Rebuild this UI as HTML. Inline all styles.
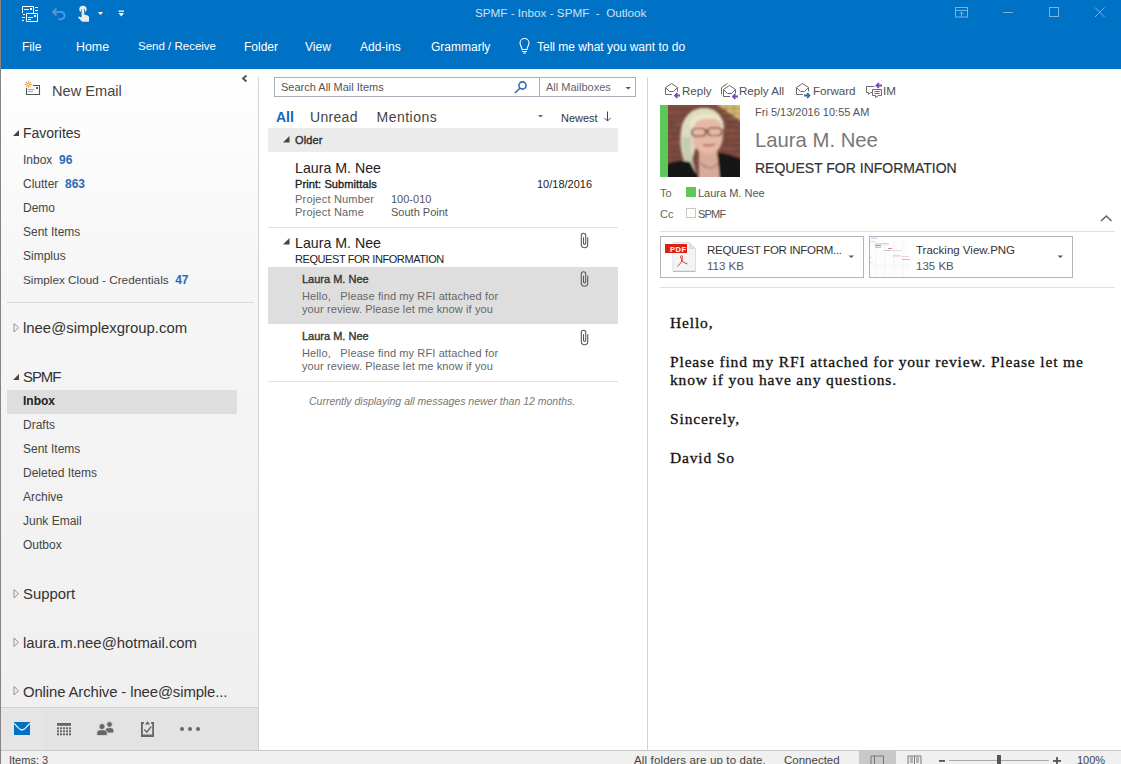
<!DOCTYPE html>
<html><head><meta charset="utf-8">
<style>
*{margin:0;padding:0;box-sizing:border-box}
html,body{width:1121px;height:764px;overflow:hidden;background:#fff;font-family:"Liberation Sans",sans-serif}
.a{position:absolute}
.t{position:absolute;white-space:pre;line-height:1;font-family:"Liberation Sans",sans-serif}
#hdr{left:0;top:0;width:1121px;height:69px;background:#0072c6}
#lp{left:0;top:69px;width:259px;height:681px;background:linear-gradient(#ffffff,#f6f6f6 30%,#efefef)}
.fold{font-size:12px;color:#444}
.cnt{font-size:12px;color:#2a6ab8;font-weight:bold}
.acct{font-size:14.9px;color:#333}
</style></head><body>
<!-- header -->
<div id="hdr" class="a"></div>
<div class="t" style="left:475px;top:7px;font-size:11.7px;color:#cde0f2">SPMF - Inbox - SPMF  -  Outlook</div>
<div class="t" style="left:22px;top:41px;font-size:12px;color:#fff">File</div>
<div class="t" style="left:76px;top:41px;font-size:12.4px;color:#fff">Home</div>
<div class="t" style="left:138px;top:41px;font-size:11.5px;color:#fff">Send / Receive</div>
<div class="t" style="left:244px;top:41px;font-size:12px;color:#fff">Folder</div>
<div class="t" style="left:305px;top:41px;font-size:12px;color:#fff">View</div>
<div class="t" style="left:360px;top:41px;font-size:12px;color:#fff">Add-ins</div>
<div class="t" style="left:431px;top:41px;font-size:12px;color:#fff">Grammarly</div>
<div class="t" style="left:537px;top:41px;font-size:12px;color:#fff">Tell me what you want to do</div>

<!-- left pane -->
<div id="lp" class="a"></div>
<div class="a" style="left:258px;top:77px;width:1px;height:630px;background:#d4d4d4"></div>
<div class="t" style="left:52px;top:83.5px;font-size:14.6px;color:#444">New Email</div>
<div class="t" style="left:23px;top:126px;font-size:14px;color:#333">Favorites</div>
<div class="t fold" style="left:23px;top:154px">Inbox  <span class="cnt">96</span></div>
<div class="t fold" style="left:23px;top:178px">Clutter  <span class="cnt">863</span></div>
<div class="t fold" style="left:23px;top:202px">Demo</div>
<div class="t fold" style="left:23px;top:226px">Sent Items</div>
<div class="t fold" style="left:23px;top:250px">Simplus</div>
<div class="t fold" style="left:23px;top:274px;font-size:11.75px">Simplex Cloud - Credentials  <span class="cnt">47</span></div>
<div class="a" style="left:7px;top:302px;width:247px;height:1px;background:#d8d8d8"></div>
<div class="t acct" style="left:23px;top:321px">lnee@simplexgroup.com</div>
<div class="t acct" style="left:23px;top:370px;letter-spacing:-1px">SPMF</div>
<div class="a" style="left:7px;top:390px;width:230px;height:24px;background:#dedede"></div>
<div class="t fold" style="left:23px;top:395px;font-weight:bold;color:#222">Inbox</div>
<div class="t fold" style="left:23px;top:419px">Drafts</div>
<div class="t fold" style="left:23px;top:443px">Sent Items</div>
<div class="t fold" style="left:23px;top:467px">Deleted Items</div>
<div class="t fold" style="left:23px;top:491px">Archive</div>
<div class="t fold" style="left:23px;top:515px">Junk Email</div>
<div class="t fold" style="left:23px;top:539px">Outbox</div>
<div class="t acct" style="left:23px;top:587px">Support</div>
<div class="t acct" style="left:23px;top:636px">laura.m.nee@hotmail.com</div>
<div class="t acct" style="left:23px;top:685px;letter-spacing:-0.12px">Online Archive - lnee@simple...</div>
<!-- nav bar -->
<div class="a" style="left:1px;top:707px;width:258px;height:43px;background:#e3e3e3;border-top:1px solid #d0d0d0;border-right:1px solid #d0d0d0"></div>
<div class="a" style="left:1px;top:708px;width:42px;height:42px;background:#e5e5e5"></div>

<!-- middle pane -->
<div class="a" style="left:274px;top:77px;width:362px;height:20px;border:1px solid #a9b0ba;background:#fff"></div>
<div class="a" style="left:539px;top:78px;width:1px;height:18px;background:#a9b0ba"></div>
<div class="t" style="left:281px;top:82px;font-size:11px;color:#555">Search All Mail Items</div>
<div class="t" style="left:546px;top:82px;font-size:11px;color:#666">All Mailboxes</div>
<div class="t" style="left:276px;top:110px;font-size:14px;font-weight:bold;color:#1464c0">All</div>
<div class="t" style="left:310px;top:110px;font-size:14px;color:#444;letter-spacing:0.3px">Unread</div>
<div class="t" style="left:376.5px;top:110px;font-size:14px;color:#444;letter-spacing:0.5px">Mentions</div>
<div class="t" style="left:561px;top:112.5px;font-size:11px;color:#333">Newest</div>
<div class="a" style="left:268px;top:128px;width:350px;height:24px;background:#ebebeb"></div>
<div class="t" style="left:295px;top:135px;font-size:11px;color:#333;letter-spacing:0.1px;-webkit-text-stroke:0.4px #333">Older</div>
<div class="t" style="left:295px;top:161px;font-size:14.2px;color:#222">Laura M. Nee</div>
<div class="t" style="left:295px;top:179px;font-size:11px;color:#222;letter-spacing:0.1px;-webkit-text-stroke:0.35px #222">Print: Submittals</div>
<div class="t" style="left:537px;top:179px;font-size:11px;color:#222">10/18/2016</div>
<div class="t" style="left:295px;top:194px;font-size:11px;color:#666;letter-spacing:0.2px">Project Number</div>
<div class="t" style="left:391px;top:194px;font-size:11px;color:#555">100-010</div>
<div class="t" style="left:295px;top:207px;font-size:11px;color:#666;letter-spacing:0.2px">Project Name</div>
<div class="t" style="left:391px;top:207px;font-size:11px;color:#555">South Point</div>
<div class="a" style="left:268px;top:227px;width:350px;height:1px;background:#e1e1e1"></div>
<div class="t" style="left:295px;top:236px;font-size:14.2px;color:#222">Laura M. Nee</div>
<div class="t" style="left:295px;top:254px;font-size:11px;color:#222;letter-spacing:-0.42px">REQUEST FOR INFORMATION</div>
<div class="a" style="left:268px;top:267px;width:350px;height:57px;background:#dedede"></div>
<div class="t" style="left:302px;top:274px;font-size:11px;color:#333;-webkit-text-stroke:0.35px #333">Laura M. Nee</div>
<div class="t" style="left:302px;top:291px;font-size:11px;color:#666;letter-spacing:0.12px">Hello,   Please find my RFI attached for</div>
<div class="t" style="left:302px;top:304px;font-size:11px;color:#666;letter-spacing:0.12px">your review. Please let me know if you</div>
<div class="t" style="left:302px;top:331px;font-size:11px;color:#333;-webkit-text-stroke:0.35px #333">Laura M. Nee</div>
<div class="t" style="left:302px;top:348px;font-size:11px;color:#666;letter-spacing:0.12px">Hello,   Please find my RFI attached for</div>
<div class="t" style="left:302px;top:361px;font-size:11px;color:#666;letter-spacing:0.12px">your review. Please let me know if you</div>
<div class="a" style="left:268px;top:381px;width:350px;height:1px;background:#e1e1e1"></div>
<div class="t" style="left:309px;top:396px;font-size:10.5px;font-style:italic;color:#777">Currently displaying all messages newer than 12 months.</div>
<div class="a" style="left:647px;top:77px;width:1px;height:673px;background:#d4d4d4"></div>

<!-- reading pane -->
<div class="t" style="left:682px;top:84.5px;font-size:11.6px;color:#505050">Reply</div>
<div class="t" style="left:739px;top:84.5px;font-size:11.6px;color:#505050">Reply All</div>
<div class="t" style="left:813px;top:84.5px;font-size:11.6px;color:#505050">Forward</div>
<div class="t" style="left:883px;top:84.5px;font-size:11.6px;color:#505050">IM</div>
<div class="a" style="left:660px;top:105px;width:8px;height:72px;background:#5cc85a"></div>
<div class="t" style="left:755px;top:107px;font-size:11px;color:#555">Fri 5/13/2016 10:55 AM</div>
<div class="t" style="left:755px;top:129.5px;font-size:20.3px;color:#777">Laura M. Nee</div>
<div class="t" style="left:755px;top:161px;font-size:14px;color:#333;-webkit-text-stroke:0.2px #333">REQUEST FOR INFORMATION</div>
<div class="t" style="left:660px;top:188px;font-size:11px;color:#666">To</div>
<div class="a" style="left:686px;top:187px;width:10px;height:10px;background:#5cc85a"></div>
<div class="t" style="left:698px;top:188px;font-size:11px;color:#555">Laura M. Nee</div>
<div class="t" style="left:660px;top:209px;font-size:11px;color:#666">Cc</div>
<div class="a" style="left:686px;top:208px;width:10px;height:10px;border:1px solid #c8c8c8"></div>
<div class="t" style="left:698px;top:209px;font-size:11px;color:#555;letter-spacing:-0.8px">SPMF</div>
<div class="a" style="left:660px;top:231px;width:455px;height:1px;background:#e0e0e0"></div>
<div class="a" style="left:660px;top:236px;width:204px;height:42px;border:1px solid #b4b4b4"></div>
<div class="a" style="left:869px;top:236px;width:204px;height:42px;border:1px solid #b4b4b4"></div>
<div class="t" style="left:707px;top:245px;font-size:11.5px;color:#333;letter-spacing:-0.3px">REQUEST FOR INFORM...</div>
<div class="t" style="left:707px;top:260.5px;font-size:11.5px;color:#555">113 KB</div>
<div class="t" style="left:916px;top:245px;font-size:11.5px;color:#333">Tracking View.PNG</div>
<div class="t" style="left:916px;top:260.5px;font-size:11.5px;color:#555">135 KB</div>
<div class="a" style="left:660px;top:287px;width:455px;height:1px;background:#e0e0e0"></div>
<div class="t" style="left:670px;top:314.8px;font-family:'Liberation Serif',serif;font-size:15.5px;letter-spacing:0.85px;color:#111;-webkit-text-stroke:0.3px #111">Hello,</div>
<div class="t" style="left:670px;top:353.5px;font-family:'Liberation Serif',serif;font-size:15.5px;letter-spacing:0.85px;color:#111;-webkit-text-stroke:0.3px #111">Please find my RFI attached for your review. Please let me</div>
<div class="t" style="left:670px;top:372.3px;font-family:'Liberation Serif',serif;font-size:15.5px;letter-spacing:0.85px;color:#111;-webkit-text-stroke:0.3px #111">know if you have any questions.</div>
<div class="t" style="left:670px;top:410.8px;font-family:'Liberation Serif',serif;font-size:15.5px;letter-spacing:0.85px;color:#111;-webkit-text-stroke:0.3px #111">Sincerely,</div>
<div class="t" style="left:670px;top:449.6px;font-family:'Liberation Serif',serif;font-size:15.5px;letter-spacing:0.85px;color:#111;-webkit-text-stroke:0.3px #111">David So</div>

<!-- status bar -->
<div class="a" style="left:0;top:750px;width:1121px;height:14px;background:#f0f0f0;border-top:1px solid #c8c8c8"></div>
<div class="t" style="left:9px;top:755px;font-size:11px;color:#444">Items: 3</div>
<div class="t" style="left:634px;top:755px;font-size:11.5px;color:#444;letter-spacing:0.15px">All folders are up to date.</div>
<div class="t" style="left:784px;top:755px;font-size:11.5px;color:#444">Connected</div>
<div class="a" style="left:859px;top:751px;width:37px;height:13px;background:#c8c8c8"></div>
<div class="t" style="left:1077px;top:755px;font-size:11px;color:#444">100%</div>

<svg class="a" style="left:0;top:0" width="1121" height="764" viewBox="0 0 1121 764">
<!-- QAT send/receive -->
<g fill="none" stroke="#fff" stroke-width="1">
<path d="M22.5 13V6.5H33.5V13"/><path d="M26.5 13.5H37.5V21.5H26.5Z"/>
<path d="M24 9.5H29"/><path d="M28 17.5H33M28 19.5H31"/>
</g>
<g fill="#fff"><rect x="30" y="8" width="2" height="2"/><rect x="34" y="15" width="2" height="2"/>
<rect x="35" y="7" width="3" height="1"/><rect x="35" y="10" width="3" height="1"/>
<rect x="22" y="17" width="3" height="1"/><rect x="22" y="20" width="2" height="1"/><rect x="23" y="14" width="2" height="1"/></g>
<!-- undo -->
<path d="M56.5 8.5L53 12L56.5 15.5M53.5 12H61A3.6 3.6 0 0 1 61 19.2H58.5" fill="none" stroke="#4f95d8" stroke-width="2"/>
<!-- touch hand -->
<g fill="#ececec"><path d="M79.3 9.4A3.7 3.7 0 1 1 86.7 9.4A3.7 3.7 0 0 1 85.3 12.3L85.3 11A2.3 2.3 0 1 0 80.7 11L80.7 12.3A3.7 3.7 0 0 1 79.3 9.4Z"/>
<path d="M81.6 9.6A1.3 1.3 0 0 1 84.2 9.6V14.6L87.6 15.6C88.6 15.9 89 16.6 89 17.6V21.7H82.2L78 17.6L79 16.5L81.6 17.6Z"/></g>
<path d="M98 12h5l-2.5 3z" fill="#fff"/>
<path d="M118.5 10.5h5.5v1.2h-5.5z M118.5 13h5.5l-2.75 3.5z" fill="#fff"/>
<!-- window controls -->
<g fill="none" stroke="#7fb1e0" stroke-width="1">
<rect x="955.5" y="7.5" width="12" height="9.5"/><path d="M955.5 10.5H967.5M961.5 16.5V12M959.5 14L961.5 12L963.5 14"/>
<path d="M1003 12.5H1013"/>
<rect x="1049.5" y="7.5" width="9" height="9"/>
<path d="M1095 7.5L1104.5 17M1104.5 7.5L1095 17"/>
</g>
<!-- lightbulb -->
<g fill="none" stroke="#fff" stroke-width="1.1">
<path d="M522 49.5C522 47 520 45.5 520 43A4.5 4.5 0 0 1 529 43C529 45.5 527 47 527 49.5Z"/>
<path d="M522 51.5H527M523 53H526"/>
</g>
<!-- new email icon -->
<g fill="none" stroke="#555" stroke-width="1.1">
<path d="M26.5 88V94.5H39.5V85.5H33"/>
</g>
<g stroke="#999" stroke-width="0.9"><path d="M28 89.5H34M28 91.5H33"/></g>
<rect x="36" y="87" width="2" height="2" fill="#2a6ab8"/>
<g stroke="#e8b060" stroke-width="1.1" fill="none"><circle cx="28.4" cy="84.4" r="1.3"/>
<path d="M28.4 80.5V82.6M28.4 86.2V88.3M24.5 84.4H26.6M30.2 84.4H32.3M25.8 81.8L27 83M29.8 85.8L31 87M25.8 87L27 85.8M29.8 83L31 81.8"/></g>
<!-- collapse arrow -->
<path d="M246.5 75.5L243 78.5L246.5 81.5" fill="none" stroke="#555" stroke-width="2"/>
<!-- left pane triangles -->
<path d="M13 136L19 130V136Z" fill="#444"/>
<path d="M14 323.5V332L18.5 327.75Z" fill="none" stroke="#888" stroke-width="0.9"/>
<path d="M13 380L19 374V380Z" fill="#444"/>
<path d="M14 589.5V598L18.5 593.75Z" fill="none" stroke="#888" stroke-width="0.9"/>
<path d="M14 638V646.5L18.5 642.25Z" fill="none" stroke="#888" stroke-width="0.9"/>
<path d="M14 686.5V695L18.5 690.75Z" fill="none" stroke="#888" stroke-width="0.9"/>
<!-- search -->
<g fill="none" stroke="#2e6db4" stroke-width="1.6"><circle cx="522.5" cy="85.5" r="3.6"/><path d="M519.8 88.2L515 93"/></g>
<path d="M625.5 87h5.5l-2.75 2.5z" fill="#555"/>
<path d="M538 115h5l-2.5 2.5z" fill="#666"/>
<path d="M607.5 111.5V121M604.5 118L607.5 121L610.5 118" fill="none" stroke="#444" stroke-width="1"/>
<!-- mid triangles -->
<path d="M283 142.5L289.5 136V142.5Z" fill="#444"/>
<path d="M283 244.5L289.5 238V244.5Z" fill="#444"/>
<!-- paperclips -->
<g fill="none" stroke="#5a5a5a" stroke-width="1.1"><path d="M587.7 237.3V244.5A3.2 3.2 0 0 1 581.3 244.5V235.5A2.2 2.2 0 0 1 585.7 235.5V243.3A1.1 1.1 0 0 1 583.5 243.3V237.3"/><path d="M587.7 275.8V283.0A3.2 3.2 0 0 1 581.3 283.0V274.0A2.2 2.2 0 0 1 585.7 274.0V281.8A1.1 1.1 0 0 1 583.5 281.8V275.8"/><path d="M587.7 334.3V341.5A3.2 3.2 0 0 1 581.3 341.5V332.5A2.2 2.2 0 0 1 585.7 332.5V340.3A1.1 1.1 0 0 1 583.5 340.3V334.3"/></g>
<!-- reply icons -->
<g fill="none" stroke="#6a6a6a" stroke-width="1">
<path d="M665.5 87.5V94.5H672M677.5 87.5V91.5M665.5 87.5L671.5 83.5L677.5 87.5M665.5 87.5L669.5 91.5H673.5L677.5 87.5"/>
<path d="M723.5 89.5V96.5H730M735.5 89.5V93.5M723.5 89.5L729.5 85.5L735.5 89.5M723.5 89.5L727.5 93.5H731.5L735.5 89.5M721.5 94.5V87.5L727.5 83.5"/>
<path d="M796.5 87.5V94.5H803M808.5 87.5V91.5M796.5 87.5L802.5 83.5L808.5 87.5M796.5 87.5L800.5 91.5H804.5L808.5 87.5"/>
</g>
<g fill="none" stroke="#8043b8" stroke-width="1.8"><path d="M680 95.5H675M677.3 93L675 95.5L677.3 98"/><path d="M738 96.5H733M735.3 94L733 96.5L735.3 99"/><path d="M882 85.5H876.5M878.8 83L876.5 85.5L878.8 88"/></g>
<g fill="none" stroke="#2e6db4" stroke-width="1.8"><path d="M804 95.5H809.5M807.2 93L809.5 95.5L807.2 98"/></g>
<g fill="none" stroke="#6a6a6a" stroke-width="1">
<path d="M874.5 86.5H866.5V92.5H868.5V94.5L870.5 92.5H872.5"/>
<path d="M872.5 89.5H881.5V95.5H878.5L875.5 97.5V95.5H872.5Z"/><path d="M874.5 91.5H879.5M874.5 93.5H879.5"/>
</g>
<!-- caret -->
<path d="M1101 221L1106.3 216L1111.5 221" fill="none" stroke="#666" stroke-width="1.6"/>
<!-- attachments dropdown -->
<path d="M848.5 255.5h5.5l-2.75 2.5z" fill="#555"/>
<path d="M1057.5 255.5h5.5l-2.75 2.5z" fill="#555"/>
<!-- pdf icon -->
<path d="M673 242.5H689.5L695.5 248.5V271H673Z" fill="#f4f4f4" stroke="#dcdcdc" stroke-width="1"/>
<path d="M673 271.5H695.5" stroke="#bbb" stroke-width="1"/>
<path d="M689.5 242.5V248.5H695.5" fill="#e4e4e4" stroke="#dcdcdc"/>
<rect x="665" y="244" width="22" height="9" fill="#e01f10"/>
<text x="670" y="251.5" font-family="Liberation Sans" font-weight="bold" font-size="7.5" fill="#fff" letter-spacing="0.6">PDF</text>
<path d="M677.5 266.5L681.5 262L682.5 256.5A1 1 0 0 0 680.5 257L683 262L687.5 264" fill="none" stroke="#e23a2a" stroke-width="1"/>
<!-- thumbnail -->
<rect x="870" y="237" width="40" height="40" fill="#fdfdfd"/>
<g opacity="0.6">
<g stroke="#e4e4ee" stroke-width="0.6"><path d="M876 241V277M885 241V277M894 241V277M903 241V277M870 265H910M870 268H910"/></g>
<rect x="871" y="237.6" width="6" height="1.4" fill="#c8b0f0"/>
<rect x="875" y="243.5" width="14" height="0.8" fill="#888"/>
<rect x="875" y="245" width="6" height="1.2" fill="#3a68b0"/>
<rect x="875" y="247" width="6" height="0.8" fill="#888"/>
<rect x="888" y="248" width="4" height="1" fill="#e03030"/>
<rect x="884" y="250" width="7" height="0.8" fill="#888"/>
<rect x="892" y="250.5" width="10" height="0.6" fill="#f08080"/>
<rect x="893" y="255.5" width="7" height="0.8" fill="#888"/>
<rect x="901" y="256" width="8" height="0.6" fill="#f08080"/>
<rect x="902" y="259" width="8" height="0.8" fill="#888"/>
<rect x="870" y="241" width="5" height="0.6" fill="#aaa"/>
<rect x="870" y="257" width="2" height="0.6" fill="#aaa"/><rect x="870" y="262" width="3" height="0.6" fill="#aaa"/>
</g>
<!-- nav icons -->
<rect x="14" y="722" width="16" height="13" fill="#0072c6"/>
<path d="M14.3 723.3C17 726.5 19.5 730 22 730C24.5 730 27 726.5 29.7 723.3" fill="none" stroke="#e8f0f8" stroke-width="1.3"/>
<rect x="57" y="723" width="14" height="2.8" fill="#666"/>
<g fill="#666">
<rect x="57" y="727.3" width="2" height="2"/><rect x="60" y="727.3" width="2" height="2"/><rect x="63" y="727.3" width="2" height="2"/><rect x="66" y="727.3" width="2" height="2"/><rect x="69" y="727.3" width="2" height="2"/>
<rect x="57" y="730.3" width="2" height="2"/><rect x="60" y="730.3" width="2" height="2"/><rect x="63" y="730.3" width="2" height="2"/><rect x="66" y="730.3" width="2" height="2"/><rect x="69" y="730.3" width="2" height="2"/>
<rect x="57" y="733.3" width="2" height="2"/><rect x="60" y="733.3" width="2" height="2"/><rect x="63" y="733.3" width="2" height="2"/><rect x="66" y="733.3" width="2" height="2"/><rect x="69" y="733.3" width="2" height="2"/>
</g>
<g fill="#666" stroke="#e3e3e3" stroke-width="0.8">
<circle cx="109.5" cy="724.4" r="2.8"/><path d="M105 733V730.5C105 728.3 107 727.6 109.5 727.6S113.8 728.3 113.8 730.5V733Z"/>
<circle cx="102" cy="726.6" r="3"/><path d="M96.8 735.6V732.6C96.8 730.3 99.2 729.7 102 729.7S107.2 730.3 107.2 732.6V735.6Z"/></g>
<path d="M144 722H141V737H154V722H151V723.8H152.2V734.6H142.8V723.8H144Z" fill="#666"/>
<path d="M145 724.5L147.5 721L150 724.5Z" fill="#666"/>
<path d="M144.3 729.5L146.8 732.2L151.2 726.5" fill="none" stroke="#666" stroke-width="1.4"/>
<g fill="#666"><circle cx="182" cy="729" r="2"/><circle cx="190" cy="729" r="2"/><circle cx="198" cy="729" r="2"/></g>
<!-- status icons -->
<g fill="none" stroke="#777" stroke-width="1"><path d="M871 764V756H883.5V764M874.5 756V764"/>
<path d="M908 764V756H914.5V764M914.5 756H921V764M910 758H913M910 760H913M916 758H919M916 760H919M910 762H913M916 762H919"/></g>
<rect x="949" y="760" width="100" height="1" fill="#aaa"/>
<g fill="#555"><rect x="939" y="760" width="6" height="1.8"/><rect x="1053" y="760" width="8" height="1.8"/><rect x="1056.1" y="757" width="1.8" height="7"/><rect x="997" y="755" width="4" height="9"/></g>
<!-- photo -->
<svg x="668" y="105" width="72" height="72" viewBox="0 0 72 72">
<defs><filter id="bl" x="-10%" y="-10%" width="120%" height="120%"><feGaussianBlur stdDeviation="1"/></filter>
<clipPath id="cp"><rect width="72" height="72"/></clipPath></defs>
<g clip-path="url(#cp)">
<rect width="72" height="72" fill="#7e4c40"/>
<g filter="url(#bl)">
<g stroke="#4e2e28" stroke-width="1" opacity="0.55"><path d="M0 4.5H72M0 10.5H72M0 16.5H72M0 22.5H72M0 28.5H72M0 34.5H72M0 40.5H72M0 46.5H72M0 52.5H72M0 58.5H72M0 64.5H72"/></g>
<g stroke="#4e2e28" stroke-width="0.8" opacity="0.45"><path d="M6 5V10M16 11V16M4 17V22M12 23V28M7 29V34M15 35V40M5 41V46M11 47V52M60 23V28M66 29V34M58 35V40M64 41V46M62 17V22"/></g>
<g fill="#8c5448" opacity="0.55"><rect x="1" y="5.5" width="10" height="4"/><rect x="60" y="29.5" width="9" height="4"/><rect x="56" y="41.5" width="10" height="4"/><rect x="3" y="35.5" width="8" height="4"/><rect x="57" y="23.5" width="10" height="4"/><rect x="8" y="17.5" width="8" height="4"/></g>
<path d="M47 -2H74V17Z" fill="#d4ba74"/>
<path d="M49 3.5H72M55 8.5H72M61 13.5H72M58 0V6M66 0V12" stroke="#9a8040" stroke-width="0.8"/>
<path d="M21 66C14 54 11 40 13 26C15 11 24 3 36 3C47 3 55 10 56 22L53 30L44 26L30 34Z" fill="#dedbc0"/>
<path d="M14 32C14 46 17 58 23 67L28 67C24 55 22 44 23 32Z" fill="#c6ccb4"/>
<path d="M24 28C24 16 30 12 39 12C49 12 55 19 55 29C55 41 49 50 40 50C31 50 24 41 24 28Z" fill="#e6b9a6"/>
<path d="M22 16C30 6 47 6 56 18C50 13 38 12 29 16L23 27Z" fill="#ebe6c8"/>
<g fill="none" stroke="#4a2820" stroke-width="1.2"><rect x="24" y="23.5" width="13.5" height="7.5" rx="3"/><rect x="40" y="23" width="13.5" height="7.5" rx="3"/><path d="M37.5 26H40"/></g>
<path d="M35 39.5Q41 42 47 39" stroke="#b05a5a" stroke-width="1.8" fill="none"/>
<path d="M-2 74V60C6 56 14 55 22 57L30 74Z" fill="#161414"/>
<path d="M49 48C57 48 66 51 74 55V74H50Z" fill="#141212"/>
<path d="M31 46C36 50 44 50 49 46L52 74H31Z" fill="#d9aa9a"/>
<path d="M22 57C25 63 28 68 31 74H18Z" fill="#161414"/>
<path d="M33 58Q42 68 50 58" stroke="#8a7c7c" stroke-width="1.2" fill="none"/>
</g></g>
</svg>
</svg>
<div class="a" style="left:0;top:0;width:1px;height:764px;background:#858585;z-index:5"></div>
</body></html>
